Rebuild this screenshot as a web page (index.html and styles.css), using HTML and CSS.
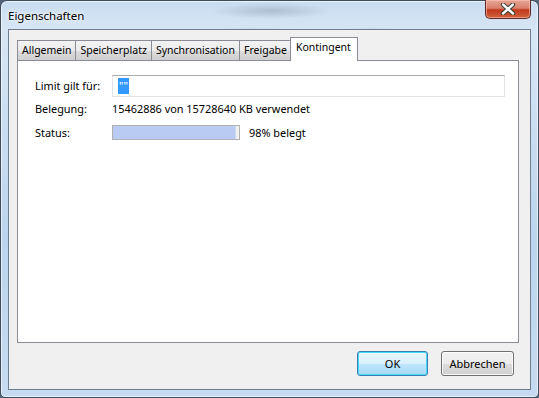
FILE: index.html
```html
<!DOCTYPE html>
<html lang="de">
<head>
    <meta charset="UTF-8">
    <meta name="viewport" content="width=device-width, initial-scale=1.0">
    <title>Eigenschaften</title>

    <link rel="stylesheet" href="styles.css">
</head>
<body>

<div class="window">

    <div class="titlebar">
        <span class="titlebar__text">Eigenschaften</span>
        <button class="close-btn" aria-label="Schließen">
            <svg width="16" height="12" viewBox="0 0 16 12">
                <path d="M3 1.5 L13 10.5 M13 1.5 L3 10.5" stroke="#3b3b3b" stroke-width="4.4" stroke-linecap="round"/>
                <path d="M3 1.5 L13 10.5 M13 1.5 L3 10.5" stroke="#fff" stroke-width="2.4" stroke-linecap="round"/>
            </svg>
        </button>
    </div>

    <div class="client">

        <div class="tabs">
            <div class="tab">Allgemein</div>
            <div class="tab">Speicherplatz</div>
            <div class="tab">Synchronisation</div>
            <div class="tab">Freigabe</div>
            <div class="tab tab--active">Kontingent</div>
        </div>

        <div class="panel">
            <div class="form">
                <label class="form__label form__label--input">Limit gilt für:</label>
                <div class="textbox"><span class="textbox__sel">""</span></div>

                <span class="form__label">Belegung:</span>
                <span class="form__value">15462886 von 15728640 KB verwendet</span>

                <span class="form__label form__label--status">Status:</span>
                <div class="status">
                    <div class="progress">
                        <div class="progress__fill" style="width: 98%;"></div>
                    </div>
                    <span>98% belegt</span>
                </div>
            </div>
        </div>

        <div class="buttons">
            <button class="btn btn--default">OK</button>
            <button class="btn btn--cancel">Abbrechen</button>
        </div>

    </div>

</div>

</body>
</html>
```

FILE: styles.css
```css
*,
*::before,
*::after {
    box-sizing: border-box;
}

body {
    margin: 0;
    width: 539px;
    height: 398px;
    background: #56667a;
    font-family: "Noto Sans", "Open Sans", sans-serif;
    font-size: 10.5px;
    color: #000;
    overflow: hidden;
}

/* the aero glass frame */
.window {
    width: 539px;
    height: 398px;
    display: flex;
    flex-direction: column;
    padding: 0 7px 7px 7px;
    border: 1px solid #404d5c;
    border-radius: 7px 7px 5px 5px;
    background:
        radial-gradient(ellipse 60px 8px at 270px 10px, rgba(110, 130, 150, 0.35), transparent),
        radial-gradient(ellipse 50px 6px at 250px 32px, rgba(100, 120, 140, 0.3), transparent),
        radial-gradient(ellipse 40px 6px at 370px 32px, rgba(100, 120, 140, 0.3), transparent),
        linear-gradient(to bottom, #c9dcf0 0, #d7e6f5 30px, #bcd4ee 60%, #c6dbf1 100%);
    box-shadow: inset 0 0 0 1px rgba(255, 255, 255, 0.6);
}

.titlebar {
    height: 28px;
    flex: none;
    display: flex;
    align-items: flex-start;
    justify-content: space-between;
}

.titlebar__text {
    margin-top: 7px;
    font-size: 11.5px;
    text-shadow: 0 0 6px rgba(255, 255, 255, 0.9), 0 0 3px #fff;
}

.close-btn {
    width: 46px;
    height: 19px;
    margin-top: -1px;
    padding: 0;
    display: flex;
    align-items: center;
    justify-content: center;
    border: 1px solid #5e2a22;
    border-top: none;
    border-radius: 0 0 5px 5px;
    background: linear-gradient(to bottom, #e8a594 0, #d8826c 45%, #c2391c 55%, #d0613d 100%);
    box-shadow: inset 0 0 0 1px rgba(255, 200, 190, 0.55);
}

.client {
    flex: 1;
    display: flex;
    flex-direction: column;
    background: #f0f0f0;
    border: 1px solid #6e7d8f;
    padding: 7px 11px 13px 8px;
}

.tabs {
    display: flex;
    align-items: flex-end;
    height: 23px;
    flex: none;
}

.tab {
    height: 20px;
    padding: 0 4px;
    line-height: 19px;
    border: 1px solid #898c95;
    border-bottom: none;
    margin-right: -1px;
    background: linear-gradient(to bottom, #f3f3f3 0, #ebebeb 50%, #dcdcdc 51%, #cfcfcf 100%);
    white-space: nowrap;
}

.tab--active {
    position: relative;
    z-index: 1;
    height: 24px;
    margin-bottom: -1px;
    padding: 0 6px 0 5px;
    margin-left: -1px;
    line-height: 19px;
    background: #fff;
}

.panel {
    flex: 1;
    background: #fff;
    border: 1px solid #898c95;
    padding: 14px 13px 0 17px;
    font-size: 10.9px;
}

.form {
    display: grid;
    grid-template-columns: 77px 1fr;
    align-items: center;
}

.textbox {
    height: 22px;
    border: 1px solid #e2e3ea;
    border-top-color: #abadb3;
    padding: 2px 0 0 5px;
}

.textbox__sel {
    display: inline-block;
    height: 16px;
    line-height: 16px;
    padding: 0 1px;
    background: #3399ff;
    color: #fff;
}

.form__label,
.form__value {
    margin-top: 3px;
    line-height: 17px;
}

.form__label--input {
    margin-top: 0;
    height: 22px;
    line-height: 22px;
}

.form__label--status {
    margin-top: 7px;
}

.status {
    margin-top: 7px;
    display: flex;
    align-items: center;
    gap: 9px;
}

.progress {
    width: 128px;
    height: 15px;
    border: 1px solid #b2b2b2;
    background: #f0f0f0;
    display: flex;
}

.progress__fill {
    height: 100%;
    background: #b9cbf3;
    border-right: 1px solid #cdd9f5;
}

.buttons {
    flex: none;
    display: flex;
    justify-content: flex-end;
    gap: 13px;
    padding: 8px 5px 0 0;
}

.btn {
    height: 25px;
    width: 71px;
    padding: 0;
    font-family: inherit;
    font-size: 11px;
    color: #000;
    border: 1px solid #707070;
    border-radius: 3px;
    background: linear-gradient(to bottom, #f2f2f2 0, #ebebeb 50%, #dddddd 51%, #cfcfcf 100%);
    box-shadow: inset 0 0 0 1px rgba(255, 255, 255, 0.8);
}

.btn--cancel {
    width: 73px;
}

.btn--default {
    border-color: #3c7fb1;
    background: linear-gradient(to bottom, #eaf6fd 0, #d9f0fc 50%, #bee6fd 51%, #a7d9f5 100%);
    box-shadow: inset 0 0 0 1px #48d8fb;
}
```
